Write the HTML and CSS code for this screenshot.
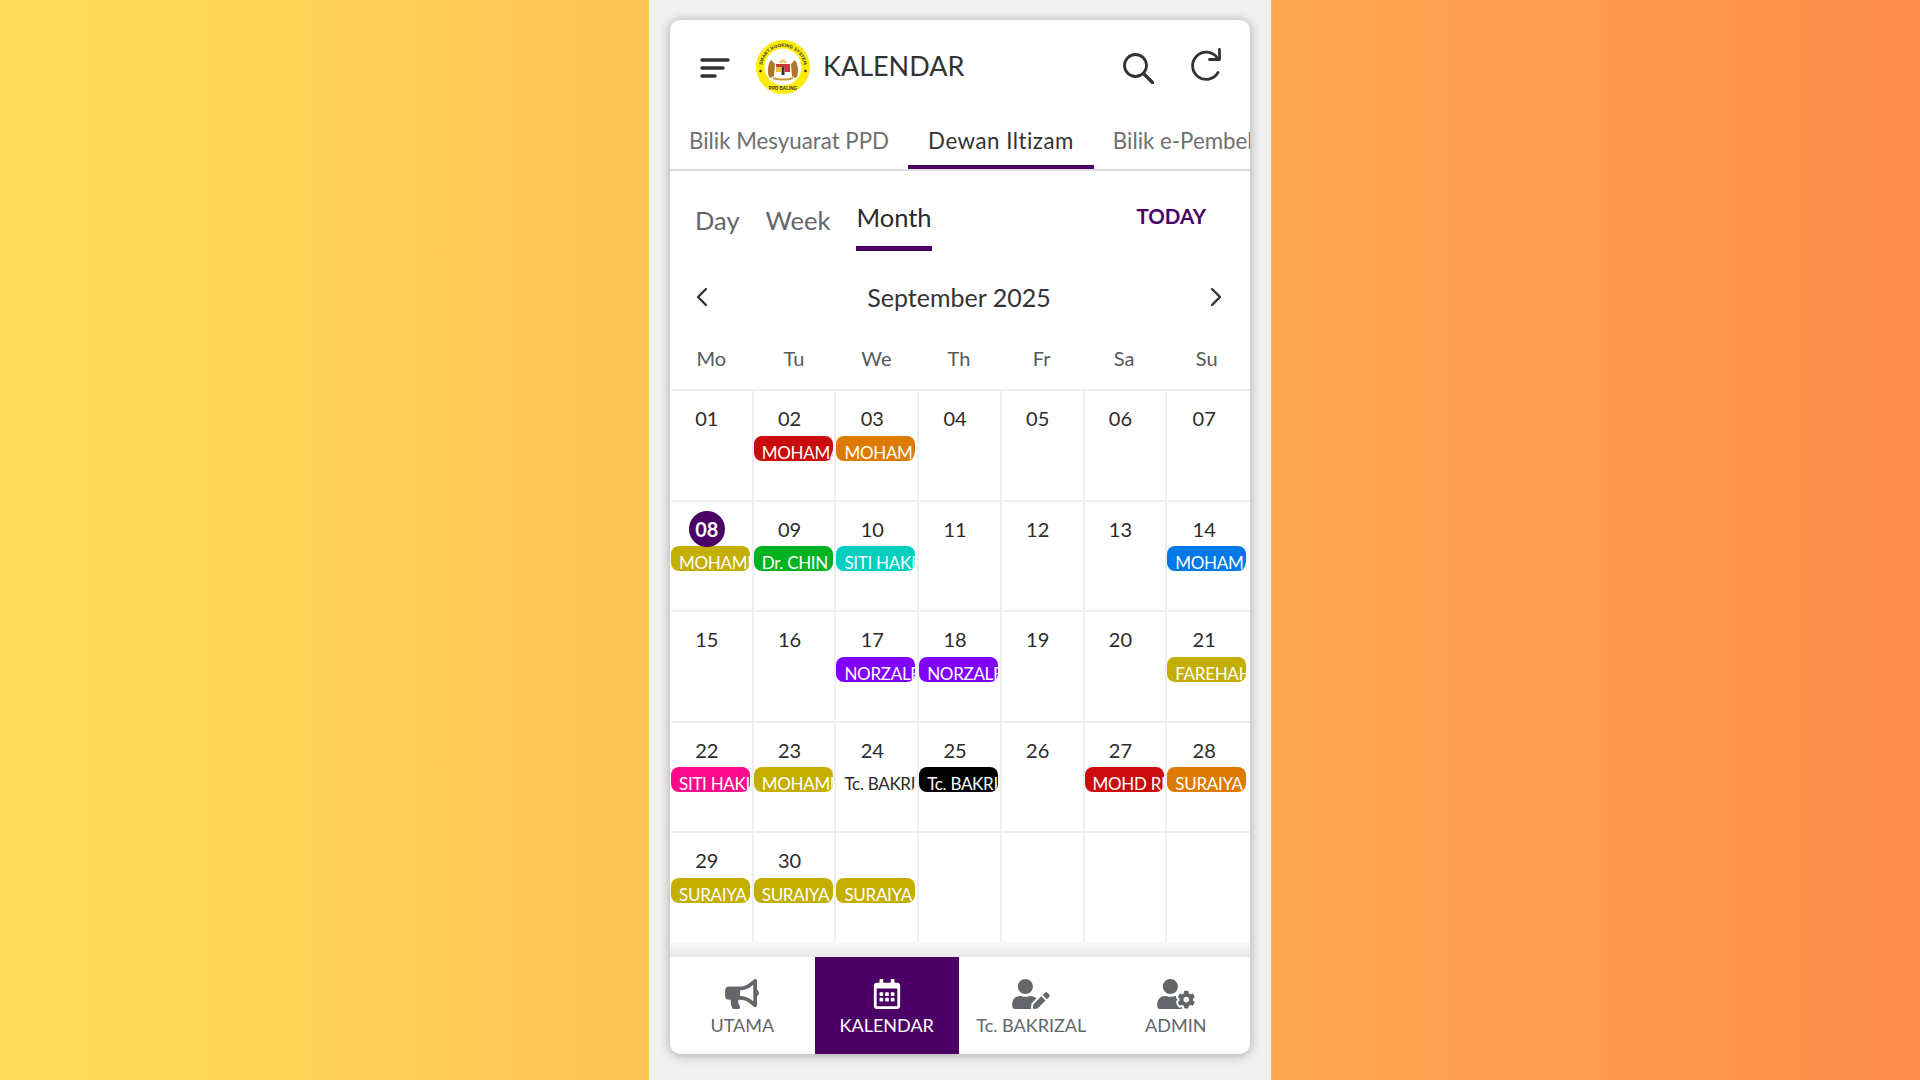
FILE: index.html
```html
<!DOCTYPE html>
<html lang="ms">
<head>
    <meta charset="UTF-8">
    <meta name="viewport" content="width=device-width, initial-scale=1.0">
    <title>Kalendar</title>
    <link rel="stylesheet" href="styles.css">
</head>
<body>
    <div class="phone">
        <div class="card">
            <header class="topbar">
                <svg class="menu-icon" viewBox="0 0 30 22"><path d="M2 3h26M2 11h21M2 19h13" fill="none" stroke="#333" stroke-width="3.4" stroke-linecap="round"/></svg>
                <svg class="logo" viewBox="0 0 54 54">
                    <defs><path id="logoArc" d="M6.5 31a20.8 20.8 0 1 1 41 0"/></defs>
                    <circle cx="27" cy="27" r="27" fill="#fdeb0a"/>
                    <circle cx="27" cy="27" r="18.5" fill="#fff"/>
                    <text class="logo-text"><textPath href="#logoArc" startOffset="50%" text-anchor="middle">SMART BOOKING SYSTEM</textPath></text>
                    <text class="logo-text" x="27" y="50" text-anchor="middle">PPD BALING</text>
                    <circle cx="4.5" cy="31" r="1.2" fill="#222"/>
                    <circle cx="49.5" cy="31" r="1.2" fill="#222"/>
                    <path d="M15 20c-3 4-4 11-2 17l2 1 3-2 1-12zM39 20c3 4 4 11 2 17l-2 1-3-2-1-12z" fill="#b0752c"/>
                    <path d="M20 24h14v8l-7 4-7-4z" fill="#fff"/>
                    <path d="M20 24h14v3H20z" fill="#c63b3b"/>
                    <path d="M25.5 27h3v8h-3z" fill="#333"/>
                    <path d="M20 27h5.5v5H20z" fill="#e6c444"/>
                    <path d="M28.5 27H34v5h-5.5z" fill="#c63b3b"/>
                    <path d="M23 23c0-5 8-5 8 0z" fill="#ecd27a"/>
                    <path d="M17 37c5 2 15 2 20 0v2c-5 2-15 2-20 0z" fill="#c79a3a"/>
                </svg>
                <h1 class="page-title">KALENDAR</h1>
                <svg class="top-icon search-icon" viewBox="0 0 32 32"><circle cx="13.5" cy="13.5" r="11" fill="none" stroke="#333" stroke-width="2.8"/><path d="M21.5 21.5l9 9" stroke="#333" stroke-width="3.4" stroke-linecap="round"/></svg>
                <svg class="top-icon refresh-icon" viewBox="0 0 34 34"><path d="M28 24.5A13.6 13.6 0 1 1 27 9.5" fill="none" stroke="#333" stroke-width="2.8" stroke-linecap="round"/><path d="M29.5 1.5v10h-10" fill="none" stroke="#333" stroke-width="2.8" stroke-linecap="round" stroke-linejoin="round"/></svg>
            </header>

            <nav class="tabs">
                <a class="tab">Bilik Mesyuarat PPD</a>
                <a class="tab active">Dewan Iltizam</a>
                <a class="tab">Bilik e-Pembelajaran</a>
            </nav>

            <div class="views">
                <span class="view">Day</span>
                <span class="view">Week</span>
                <span class="view active">Month</span>
                <span class="today-btn">TODAY</span>
            </div>

            <div class="month-nav">
                <svg class="chevron" viewBox="0 0 14 20"><path d="M11 2L3 10l8 8" fill="none" stroke="#333" stroke-width="2.4" stroke-linecap="round" stroke-linejoin="round"/></svg>
                <span class="month-label">September 2025</span>
                <svg class="chevron" viewBox="0 0 14 20"><path d="M3 2l8 8-8 8" fill="none" stroke="#333" stroke-width="2.4" stroke-linecap="round" stroke-linejoin="round"/></svg>
            </div>

            <div class="weekdays">
                <span>Mo</span><span>Tu</span><span>We</span><span>Th</span><span>Fr</span><span>Sa</span><span>Su</span>
            </div>

            <div class="month-grid">
                <div class="cell"><div class="num">01</div></div>
                <div class="cell"><div class="num">02</div><div class="chip red">MOHAMAD</div></div>
                <div class="cell"><div class="num">03</div><div class="chip orange">MOHAMAD</div></div>
                <div class="cell"><div class="num">04</div></div>
                <div class="cell"><div class="num">05</div></div>
                <div class="cell"><div class="num">06</div></div>
                <div class="cell"><div class="num">07</div></div>

                <div class="cell"><div class="num"><span class="today">08</span></div><div class="chip olive">MOHAMMAD</div></div>
                <div class="cell"><div class="num">09</div><div class="chip green">Dr. CHIN</div></div>
                <div class="cell"><div class="num">10</div><div class="chip teal">SITI HAKIMAH</div></div>
                <div class="cell"><div class="num">11</div></div>
                <div class="cell"><div class="num">12</div></div>
                <div class="cell"><div class="num">13</div></div>
                <div class="cell"><div class="num">14</div><div class="chip blue">MOHAMAD</div></div>

                <div class="cell"><div class="num">15</div></div>
                <div class="cell"><div class="num">16</div></div>
                <div class="cell"><div class="num">17</div><div class="chip purple">NORZALEHA</div></div>
                <div class="cell"><div class="num">18</div><div class="chip purple">NORZALEHA</div></div>
                <div class="cell"><div class="num">19</div></div>
                <div class="cell"><div class="num">20</div></div>
                <div class="cell"><div class="num">21</div><div class="chip olive">FAREHAH</div></div>

                <div class="cell"><div class="num">22</div><div class="chip pink">SITI HAKIMAH</div></div>
                <div class="cell"><div class="num">23</div><div class="chip olive">MOHAMMAD</div></div>
                <div class="cell"><div class="num">24</div><div class="chip plain">Tc. BAKRIZAL</div></div>
                <div class="cell"><div class="num">25</div><div class="chip black">Tc. BAKRIZAL</div></div>
                <div class="cell"><div class="num">26</div></div>
                <div class="cell"><div class="num">27</div><div class="chip red">MOHD RIZAL</div></div>
                <div class="cell"><div class="num">28</div><div class="chip orange">SURAIYA</div></div>

                <div class="cell"><div class="num">29</div><div class="chip olive">SURAIYA</div></div>
                <div class="cell"><div class="num">30</div><div class="chip olive">SURAIYA</div></div>
                <div class="cell"><div class="num"></div><div class="chip olive">SURAIYA</div></div>
                <div class="cell"></div>
                <div class="cell"></div>
                <div class="cell"></div>
                <div class="cell"></div>
            </div>

            <div class="grid-fade"></div>

            <footer class="bottom-nav">
                <a class="nav-item">
                    <svg class="nav-icon" viewBox="0 0 576 512"><path d="M576 240c0-23.63-12.95-44.04-32-55.12V32.01C544 23.26 537.02 0 512 0c-7.12 0-14.19 2.38-19.98 7.02l-85.03 68.03C364.28 109.19 310.66 128 256 128H64c-35.35 0-64 28.65-64 64v96c0 35.35 28.65 64 64 64h33.7c-1.39 10.48-2.18 21.14-2.18 32 0 39.77 9.26 77.35 25.56 110.94 5.19 10.69 16.52 17.06 28.4 17.06h74.28c26.05 0 41.69-29.84 25.9-50.56-16.4-21.52-26.15-48.36-26.15-77.44 0-11.11 1.62-21.79 4.41-32H256c54.66 0 108.28 18.81 150.98 52.95l85.03 68.03a32.023 32.023 0 0 0 19.98 7.02c24.92 0 32-22.78 32-32V295.13C563.05 284.04 576 263.63 576 240zm-96 141.42l-33.05-26.44C392.95 311.78 325.12 288 256 288v-96c69.12 0 136.95-23.78 190.95-66.98L480 98.58v282.84z"/></svg>
                    <span>UTAMA</span>
                </a>
                <a class="nav-item active">
                    <svg class="nav-icon" viewBox="0 0 448 512"><path d="M148 288h-40c-6.6 0-12-5.4-12-12v-40c0-6.6 5.4-12 12-12h40c6.6 0 12 5.4 12 12v40c0 6.6-5.4 12-12 12zm108-12v-40c0-6.6-5.4-12-12-12h-40c-6.6 0-12 5.4-12 12v40c0 6.6 5.4 12 12 12h40c6.6 0 12-5.4 12-12zm96 0v-40c0-6.6-5.4-12-12-12h-40c-6.6 0-12 5.4-12 12v40c0 6.6 5.4 12 12 12h40c6.6 0 12-5.4 12-12zm-96 96v-40c0-6.6-5.4-12-12-12h-40c-6.6 0-12 5.4-12 12v40c0 6.6 5.4 12 12 12h40c6.6 0 12-5.4 12-12zm-96 0v-40c0-6.6-5.4-12-12-12h-40c-6.6 0-12 5.4-12 12v40c0 6.6 5.4 12 12 12h40c6.6 0 12-5.4 12-12zm192 0v-40c0-6.6-5.4-12-12-12h-40c-6.6 0-12 5.4-12 12v40c0 6.6 5.4 12 12 12h40c6.6 0 12-5.4 12-12zm96-260v352c0 26.5-21.5 48-48 48H48c-26.5 0-48-21.5-48-48V112c0-26.5 21.5-48 48-48h48V12c0-6.6 5.4-12 12-12h40c6.6 0 12 5.4 12 12v52h128V12c0-6.6 5.4-12 12-12h40c6.6 0 12 5.4 12 12v52h48c26.5 0 48 21.5 48 48zm-48 346V160H48v298c0 3.3 2.7 6 6 6h340c3.3 0 6-2.7 6-6z"/></svg>
                    <span>KALENDAR</span>
                </a>
                <a class="nav-item">
                    <svg class="nav-icon" viewBox="0 0 640 512"><path d="M224 256c70.7 0 128-57.3 128-128S294.7 0 224 0 96 57.3 96 128s57.3 128 128 128zm89.6 32h-16.7c-22.2 10.2-46.9 16-72.9 16s-50.6-5.8-72.9-16h-16.7C60.2 288 0 348.2 0 422.4V464c0 26.5 21.5 48 48 48h274.9c-2.4-6.8-3.4-14-2.6-21.3l6.8-60.9 1.2-11.1 7.9-7.9 77.3-77.3c-24.5-27.7-60-45.5-99.9-45.5zm45.3 145.3l-6.8 61c-1.1 10.2 7.5 18.8 17.6 17.6l60.9-6.8 137.9-137.9-71.7-71.7-137.9 137.8zM633 268.9L595.1 231c-9.3-9.3-24.5-9.3-33.8 0l-37.8 37.8-4.1 4.1 71.8 71.7 41.8-41.8c9.3-9.4 9.3-24.5 0-33.9z"/></svg>
                    <span>Tc. BAKRIZAL</span>
                </a>
                <a class="nav-item">
                    <svg class="nav-icon" viewBox="0 0 640 512"><path d="M610.5 373.3c2.6-14.1 2.6-28.5 0-42.6l25.8-14.9c3-1.7 4.3-5.2 3.3-8.5-6.7-21.5-18.2-41-33.2-57.4-2.3-2.5-6-3.1-9-1.4l-25.8 14.9c-10.9-9.3-23.4-16.5-36.9-21.3v-29.8c0-3.4-2.4-6.4-5.7-7.1-22.3-5-45-4.8-66.2 0-3.3.7-5.7 3.7-5.7 7.1v29.8c-13.5 4.8-26 12-36.9 21.3l-25.8-14.9c-2.9-1.7-6.7-1.1-9 1.4-15 16.4-26.5 35.9-33.2 57.4-1 3.3.4 6.8 3.3 8.5l25.8 14.9c-2.6 14.1-2.6 28.5 0 42.6l-25.8 14.9c-3 1.7-4.3 5.2-3.3 8.5 6.7 21.5 18.2 41 33.2 57.4 2.3 2.5 6 3.1 9 1.4l25.8-14.9c10.9 9.3 23.4 16.5 36.9 21.3v29.8c0 3.4 2.4 6.4 5.7 7.1 22.3 5 45 4.8 66.2 0 3.3-.7 5.7-3.7 5.7-7.1v-29.8c13.5-4.8 26-12 36.9-21.3l25.8 14.9c2.9 1.7 6.7 1.1 9-1.4 15-16.4 26.5-35.9 33.2-57.4 1-3.3-.4-6.8-3.3-8.5l-25.8-14.9zM496 400.5c-26.8 0-48.5-21.8-48.5-48.5s21.8-48.5 48.5-48.5 48.5 21.8 48.5 48.5-21.7 48.5-48.5 48.5zM224 256c70.7 0 128-57.3 128-128S294.7 0 224 0 96 57.3 96 128s57.3 128 128 128zm201.2 226.5c-2.3-1.2-4.6-2.6-6.8-3.9l-7.9 4.6c-6 3.4-12.8 5.3-19.6 5.3-10.9 0-21.4-4.6-28.9-12.6-18.3-19.8-32.3-43.9-40.2-69.6-5.5-17.7 1.9-36.4 17.9-45.7l7.9-4.6c-.1-2.6-.1-5.2 0-7.8l-7.9-4.6c-16-9.2-23.4-28-17.9-45.7.9-2.9 2.2-5.8 3.2-8.7-3.8-.3-7.5-1.2-11.4-1.2h-16.7c-22.2 10.2-46.9 16-72.9 16s-50.6-5.8-72.9-16h-16.7C60.2 288 0 348.2 0 422.4V464c0 26.5 21.5 48 48 48h352c10.1 0 19.5-3.2 27.2-8.5-1.2-3.8-2-7.7-2-11.8v-9.2z"/></svg>
                    <span>ADMIN</span>
                </a>
            </footer>
        </div>
    </div>
</body>
</html>
```

FILE: styles.css
```css
* {
    box-sizing: border-box;
}
html, body {
    height: 100%;
}
body {
    margin: 0;
    height: 1080px;
    overflow: hidden;
    display: flex;
    justify-content: center;
    background: linear-gradient(90deg, #ffdf5a 0%, #ff8c4c 100%);
    font-family: Lato, "Noto Sans", sans-serif;
    color: #333;
}
.phone {
    width: 622px;
    height: 1080px;
    padding: 20px 21px 26px 21px;
    background: #f1f1f1;
}
.card {
    height: 1034px;
    background: #fff;
    border-radius: 10px;
    box-shadow: 0 1px 12px rgba(0,0,0,0.32);
    overflow: hidden;
    display: flex;
    flex-direction: column;
}

/* top bar */
.topbar {
    height: 93px;
    flex: none;
    display: flex;
    align-items: center;
    padding: 0 26px 0 30px;
}
.menu-icon {
    width: 30px;
    height: 22px;
    margin-top: 2px;
}
.logo {
    width: 54px;
    height: 54px;
    margin-left: 26px;
}
.logo-text {
    font-family: "Liberation Sans", sans-serif;
    font-size: 4.6px;
    font-weight: bold;
    fill: #333;
}
.page-title {
    margin: -2px 0 0 13px;
    font-size: 27px;
    font-weight: 400;
    flex: 1;
}
.top-icon {
    width: 32px;
    height: 32px;
}
.search-icon {
    margin-top: 2px;
}
.refresh-icon {
    width: 34px;
    height: 34px;
    margin-left: 36px;
    margin-top: -3px;
}

/* room tabs */
.tabs {
    height: 58px;
    flex: none;
    display: flex;
    overflow: hidden;
    border-bottom: 2px solid #dcdce0;
}
.tab {
    flex: none;
    height: 58px;
    padding: 14px 19px 0;
    font-size: 22.3px;
    color: #6f6f6f;
    white-space: nowrap;
}
.tab.active {
    padding: 14px 20px 0;
    color: #333;
    letter-spacing: 0.5px;
    border-bottom: 4px solid #4b0066;
    height: 56px;
}

/* day/week/month */
.views {
    height: 99px;
    flex: none;
    display: flex;
    align-items: flex-start;
    padding: 0 44px 0 25px;
}
.view {
    margin-right: 26px;
    margin-top: 34px;
    font-size: 25.5px;
    color: #63666b;
}
.view.active {
    margin-top: 31px;
    padding-bottom: 14px;
    color: #2b2b2b;
    border-bottom: 5px solid #4b0066;
}
.today-btn {
    margin-left: auto;
    margin-top: 33px;
    font-size: 20.5px;
    font-weight: 700;
    color: #4b0066;
}

.month-nav {
    height: 75px;
    flex: none;
    display: flex;
    align-items: center;
    justify-content: space-between;
    padding: 0 27px 21px 25px;
}
.chevron {
    width: 14px;
    height: 20px;
}
.month-label {
    font-size: 25px;
}

.weekdays {
    height: 44px;
    flex: none;
    display: grid;
    grid-template-columns: repeat(7, 1fr);
    align-items: start;
    padding: 1px 2px 0 0;
    text-align: center;
    font-size: 20px;
    color: #55585c;
}

.month-grid {
    flex: none;
    display: grid;
    grid-template-columns: repeat(7, 1fr);
    grid-auto-rows: 110.5px;
    padding-left: 1px;
}
.cell {
    border-top: 2px solid #eeeef2;
    border-right: 2px solid #eeeef2;
    padding-top: 9.5px;
    overflow: hidden;
}
.cell:nth-child(7n) {
    border-right: none;
}
.num {
    height: 35px;
    padding-right: 9px;
    display: flex;
    align-items: center;
    justify-content: center;
    font-size: 20px;
    color: #2b2b2b;
}
.today {
    width: 36px;
    height: 36px;
    flex: none;
    border-radius: 50%;
    background: #4b0066;
    color: #fff;
    font-weight: 700;
    display: flex;
    align-items: center;
    justify-content: center;
}
.chip {
    height: 25px;
    width: 79px;
    padding: 6px 0 0 8px;
    border-radius: 8px;
    overflow: hidden;
    white-space: nowrap;
    font-size: 17px;
    letter-spacing: -0.3px;
    line-height: 22px;
    color: #fff;
}
.red { background: #cc0c0c; }
.orange { background: #dc7b00; }
.olive { background: #c4ae00; }
.green { background: #00b320; }
.teal { background: #00cfc0; }
.blue { background: #0078e6; }
.purple { background: #8000ff; }
.pink { background: #ff0a8c; }
.black { background: #000; }
.plain { color: #2b2b2b; }

.grid-fade {
    height: 15.5px;
    flex: none;
    background: linear-gradient(#f9f9fa, #e9e9ec);
}

/* bottom nav */
.bottom-nav {
    flex: 1;
    display: grid;
    grid-template-columns: repeat(4, 1fr);
    padding-right: 2px;
}
.nav-item {
    display: flex;
    flex-direction: column;
    align-items: center;
    padding-top: 22px;
    font-size: 18px;
    color: #63666b;
}
.nav-item.active {
    background: #4b0066;
    color: #fff;
}
.nav-icon {
    height: 30px;
    width: 40px;
    fill: currentColor;
    margin-bottom: 5px;
}
```
